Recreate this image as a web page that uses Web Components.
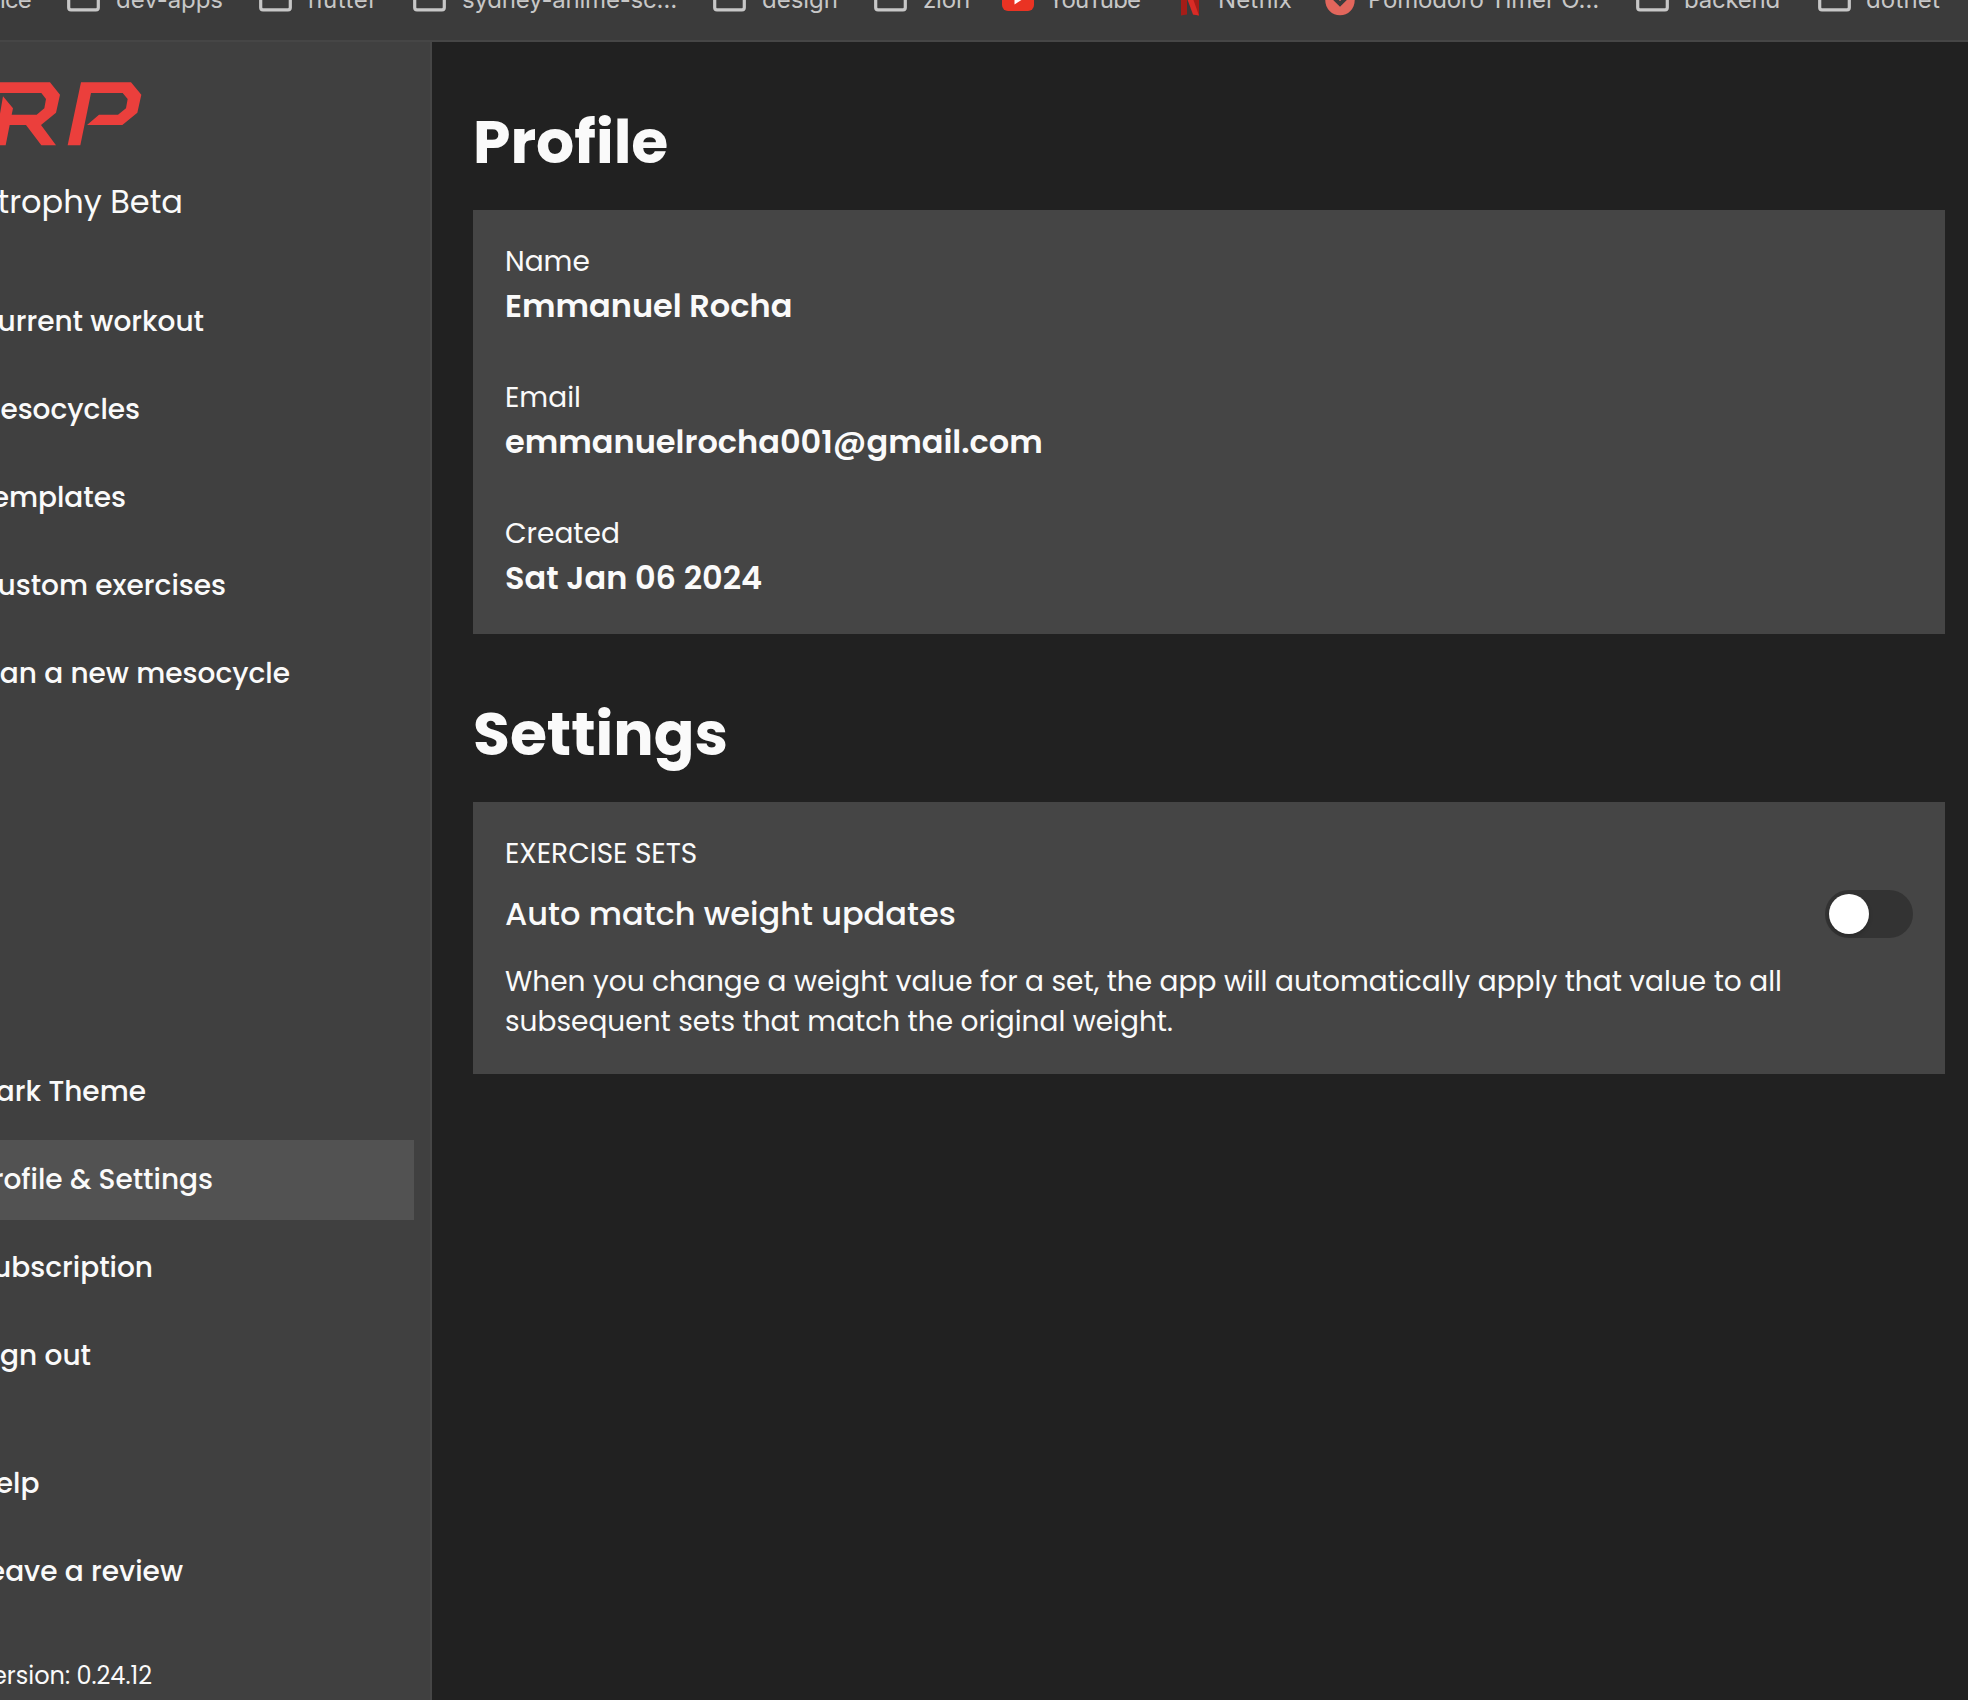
<!DOCTYPE html>
<html lang="en">
<head>
<meta charset="utf-8">
<title>Profile &amp; Settings</title>
<style>
html,body{margin:0;height:1700px;overflow:hidden;background:#212121}
body{font-family:Poppins,Inter,"Liberation Sans",sans-serif;color:#fafafa}
</style>
</head>
<body>
<rp-app></rp-app>
<script>
const define=(name,css,html,ready)=>customElements.define(name,class extends HTMLElement{
  connectedCallback(){
    if(this.shadowRoot)return;
    const root=this.attachShadow({mode:'open'});
    root.innerHTML=`<style>${css}</style>${typeof html==='function'?html(this):html}`;
    if(ready)ready(this);
  }
});

/* A single line of type; with a "w" attribute it is tracked to span that width. */
define('fit-text',':host{display:block;white-space:pre;width:max-content}','<slot></slot>',el=>{
  const w=+el.getAttribute('w');
  if(!w)return;
  const natural=el.getBoundingClientRect().width;
  el.style.letterSpacing=((w-natural)/(el.textContent.length))+'px';
});

const icons={
  folder:'<svg width="33" height="30" viewBox="0 0 33 30"><path d="M1.7 5V25.5Q1.7 27.8 4 27.8H29Q31.3 27.8 31.3 25.5V8Q31.3 5.5 29 5.5H16L12 2H4Q1.7 2 1.7 5Z" fill="none" stroke="#c7c7c7" stroke-width="3.2"/></svg>',
  youtube:'<svg width="33" height="30" viewBox="0 0 33 30"><rect x="-1" y="5" width="32" height="24" rx="6" fill="#ea3323"/><path d="M11.500 11.500 20 17 11.500 22.500Z" fill="#fff"/></svg>',
  netflix:'<svg width="33" height="34" viewBox="0 0 33 34"><path d="M7 0H13V32.600L7 33.500Z M19 0H25V33.500L19 32.600Z" fill="#a51d18"/><path d="M7 0H13L25 33.500 19 32.600Z" fill="#d92b26"/></svg>',
  pomodoro:'<svg width="33" height="34" viewBox="0 0 33 34"><circle cx="15" cy="18.500" r="14.700" fill="#e2665c"/><path d="M9 16 15 22 24 13" fill="none" stroke="#3b3b3b" stroke-width="4"/></svg>',
  none:''
};
define('bookmark-item',
 ':host{display:flex;flex:none;align-items:flex-start;height:42px}.i{flex:none;height:34px}svg{display:block;overflow:visible}',
 el=>`<div class="i" style="width:${el.getAttribute('icon-box')}px">${icons[el.getAttribute('icon')]}</div><slot></slot>`,
 el=>{el.style.width=el.getAttribute('span')+'px'});

const marks=[
 ['none',0,67,31,'ice'],['folder',49,192,107,'dev-apps'],['folder',48,154,71,'flutter'],
 ['folder',49,300,215,'sydney-anime-sc…'],['folder',49,161,76,'design'],['folder',49,129,47,'zion'],
 ['youtube',45,171,92,'YouTube'],['netflix',44,151,74,'Netflix'],['pomodoro',43,311,231,'Pomodoro Timer O…'],
 ['folder',48,182,96,'backend'],['folder',48,150,74,'dotnet']];
define('bookmarks-bar',
 ':host{display:block;box-sizing:border-box;height:42px;background:#3b3b3b;border-bottom:2px solid #464646;overflow:hidden}.row{display:flex;margin-top:-18px;color:#c7c7c7;font:400 24px/36px Inter,sans-serif}',
 '<div class="row">'+marks.map(m=>`<bookmark-item icon="${m[0]}" icon-box="${m[1]}" span="${m[2]}"><fit-text w="${m[3]}">${m[4]}</fit-text></bookmark-item>`).join('')+'</div>');

define('rp-logo',':host{display:block;height:65px;overflow:hidden}svg{display:block}',
 `<svg width="150" height="65" viewBox="0 0 450 195" fill="#eb3f3c"><path d="M-10 4H150L180 41 168 95 123 132 168 193H124L78 132H29L17 193H-10V98H0L9 46 39 82 35 101H110L133 82 138 54 124 36H-10Z"/><path d="M243 4H393L424 41 412 95 367 132H261L297 101H354L378 82 383 54 368 36H273L241 193H203Z"/></svg>`);

/* Right-anchored line: "end" is where the label stops, anything longer runs off to the left. */
define('end-text',':host{display:flex;justify-content:flex-end;white-space:pre}span{flex:none}','<span><slot></slot></span>',
 el=>{el.style.width=el.getAttribute('end')+'px'});
define('nav-item',
 ':host{display:block;box-sizing:border-box;height:80px;margin-bottom:8px;font-size:28px;line-height:80px;font-weight:500}:host([active]){background:#525252}',
 '<slot></slot>');
const nav=(t,end,a='')=>`<nav-item ${a}><end-text end="${end}">${t}</end-text></nav-item>`;
define('side-bar',
 `:host{display:flex;flex-direction:column;box-sizing:border-box;flex:none;width:432px;padding:39px 16px 0 0;background:#404040;border-right:2px solid #464646;overflow:hidden}
 .brand{margin:32px 0 56px;font-size:32px;line-height:48px;height:48px}
 .lower{margin-top:330px}.help{margin-top:40px}
 .version{margin-top:38px;font-size:24px;line-height:36px}`,
 `<rp-logo></rp-logo><end-text class="brand" end="183">trophy Beta</end-text>
 <nav>${nav('urrent workout',204)}${nav('esocycles',140)}${nav('emplates',126)}${nav('ustom exercises',226)}${nav('an a new mesocycle',290)}</nav>
 <div class="lower">${nav('ark Theme',146)}${nav('rofile &amp; Settings',213,'active')}${nav('ubscription',153)}${nav('gn out',91)}</div>
 <div class="help">${nav('elp',39.500)}${nav('eave a review',183)}</div>
 <end-text class="version" end="152">ersion: 0.24.12</end-text>`);

define('section-title',':host{display:block;height:90px;font-size:60px;line-height:93px;font-weight:700}','<slot></slot>');
define('info-card',':host{display:block;box-sizing:border-box;background:#454545;padding:32px}','<slot></slot>');
define('info-field',
 ':host{display:block;height:88px;margin-bottom:48px}:host(:last-of-type){margin-bottom:0}.l{font-size:28px;line-height:40px}.v{font-size:32px;line-height:48px;font-weight:600}',
 el=>`<fit-text class="l">${el.getAttribute('label')}</fit-text><fit-text class="v">${el.getAttribute('value')}</fit-text>`);
define('toggle-switch',
 ':host{display:block;box-sizing:border-box;width:88px;height:48px;padding:4px;border-radius:24px;background:#333}.k{width:40px;height:40px;border-radius:50%;background:#fff;box-shadow:0 2px 4px #0003}',
 '<div class="k"></div>');
define('setting-row',
 `:host{display:block}.c{font-size:28px;line-height:40px}.r{display:flex;justify-content:space-between;align-items:center;height:48px;margin:16px 0 24px}
 .t{font-size:32px;line-height:48px;font-weight:500}.d{font-size:28px;line-height:40px}`,
 `<fit-text class="c">EXERCISE SETS</fit-text><div class="r"><fit-text class="t">Auto match weight updates</fit-text><toggle-switch></toggle-switch></div>
 <fit-text class="d">When you change a weight value for a set, the app will automatically apply that value to all</fit-text><fit-text class="d">subsequent sets that match the original weight.</fit-text>`);
define('profile-page',
 ':host{display:block;flex:1;padding:54px 23px 0 41px;background:#212121}.p{height:424px;margin-top:24px}.s{height:272px;margin-top:24px}.h2{margin-top:54px}',
 `<section-title><fit-text>Profile</fit-text></section-title>
 <info-card class="p"><info-field label="Name" value="Emmanuel Rocha"></info-field><info-field label="Email" value="emmanuelrocha001@gmail.com"></info-field><info-field label="Created" value="Sat Jan 06 2024"></info-field></info-card>
 <section-title class="h2"><fit-text>Settings</fit-text></section-title>
 <info-card class="s"><setting-row></setting-row></info-card>`);
define('rp-app',
 ':host{display:flex;flex-direction:column;width:1968px;height:1700px;overflow:hidden}main{display:flex;flex:1;min-height:0}',
 '<bookmarks-bar></bookmarks-bar><main><side-bar></side-bar><profile-page></profile-page></main>');
</script>
</body>
</html>
